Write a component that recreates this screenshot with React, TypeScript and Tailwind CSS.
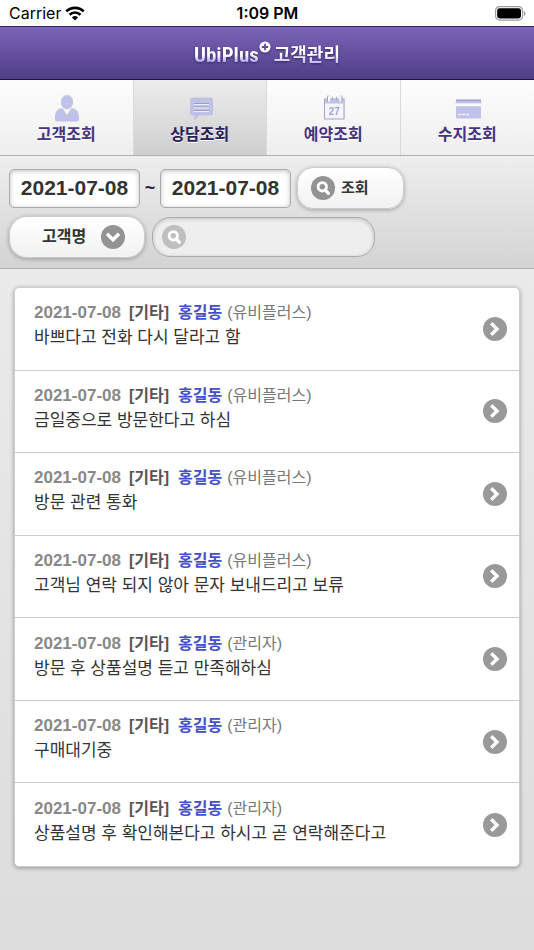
import { useState, type ReactNode } from 'react';
import clsx from 'clsx';

interface Consult {
  id: number;
  date: string;
  type: string;
  customer: string;
  writer: string;
  memo: string;
}

const CONSULTS: Consult[] = [
  { id: 1, date: '2021-07-08', type: '기타', customer: '홍길동', writer: '유비플러스', memo: '바쁘다고 전화 다시 달라고 함' },
  { id: 2, date: '2021-07-08', type: '기타', customer: '홍길동', writer: '유비플러스', memo: '금일중으로 방문한다고 하심' },
  { id: 3, date: '2021-07-08', type: '기타', customer: '홍길동', writer: '유비플러스', memo: '방문 관련 통화' },
  { id: 4, date: '2021-07-08', type: '기타', customer: '홍길동', writer: '유비플러스', memo: '고객님 연락 되지 않아 문자 보내드리고 보류' },
  { id: 5, date: '2021-07-08', type: '기타', customer: '홍길동', writer: '관리자', memo: '방문 후 상품설명 듣고 만족해하심' },
  { id: 6, date: '2021-07-08', type: '기타', customer: '홍길동', writer: '관리자', memo: '구매대기중' },
  { id: 7, date: '2021-07-08', type: '기타', customer: '홍길동', writer: '관리자', memo: '상품설명 후 확인해본다고 하시고 곧 연락해준다고' }
];

function RoundIcon({ children, className }: { children: ReactNode; className?: string }) {
  return (
    <svg
      viewBox="0 0 24 24"
      className={clsx('size-6 shrink-0', className)}
      fill="none"
      stroke="#fff"
      aria-hidden="true"
    >
      <circle cx="12" cy="12" r="12" fill="currentColor" stroke="none" />
      {children}
    </svg>
  );
}

function SearchIcon({ className }: { className?: string }) {
  return (
    <RoundIcon className={className}>
      <circle cx="11.3" cy="10.8" r="4.2" strokeWidth="2.8" />
      <path d="M14.2 14 L17.4 17.4" strokeWidth="3.2" strokeLinecap="round" />
    </RoundIcon>
  );
}

function StatusBar() {
  return (
    <div className="grid h-[26px] grid-cols-3 items-center bg-white pr-2 pl-[9px] font-['Inter',sans-serif] text-base text-black">
      <div className="flex items-center gap-1">
        <span>Carrier</span>
        <svg viewBox="0 0 20 15" className="h-[15px] w-5" fill="none" stroke="#000" strokeWidth="2.6" aria-hidden="true">
          <path d="M1.3 5.4 A12.5 12.5 0 0 1 18.7 5.4" />
          <path d="M4.5 8.7 A8 8 0 0 1 15.5 8.7" />
          <path d="M10 14.6 L6.9 11.4 A4.6 4.6 0 0 1 13.1 11.4 Z" fill="#000" stroke="none" />
        </svg>
      </div>
      <span className="text-center font-semibold">1:09 PM</span>
      <svg viewBox="0 0 31 15" className="h-[15px] w-[31px] justify-self-end" aria-hidden="true">
        <rect x="0.6" y="0.6" width="27" height="13.5" rx="4" fill="none" stroke="#9b9b9b" strokeWidth="1.2" />
        <rect x="2.2" y="2.2" width="23.8" height="10.3" rx="2.4" fill="#000" />
        <path d="M29 5 C31 6 31 9 29 10 Z" fill="#9b9b9b" />
      </svg>
    </div>
  );
}

function TitleBar() {
  return (
    <header className="flex h-[54px] items-center justify-center border-t border-b border-t-[#36265f] border-b-[#22104e] bg-linear-to-b from-[#7b64b8] to-[#503e87] pt-[3px]">
      <h1 className="flex items-center drop-shadow-[0_1px_1px_rgba(30,15,70,0.6)]">
        <span className="bg-linear-to-b from-white from-50% to-[#b4a2f5] to-75% bg-clip-text font-['Roboto_Condensed','Roboto',sans-serif] text-[21px] leading-7 font-bold text-transparent">
          UbiPlus
        </span>
        <svg viewBox="0 0 12 12" className="mr-[3px] size-3 self-start" aria-hidden="true">
          <circle cx="6" cy="6" r="5.6" fill="#fff" />
          <path d="M6 2.8 V9.2 M2.8 6 H9.2" stroke="#5f4b9b" strokeWidth="1.8" />
        </svg>
        <span className="bg-linear-to-b from-white from-50% to-[#c4b4fa] to-80% bg-clip-text text-lg leading-7 font-bold text-transparent">
          고객관리
        </span>
      </h1>
    </header>
  );
}

const TABS = [
  {
    label: '고객조회',
    icon: (
      <>
        <ellipse cx="15" cy="7.5" rx="6" ry="6.7" />
        <path d="M3 24 C3 17 5.5 14.2 10.5 14 L15 21 L19.5 14 C24.5 14.2 27 17 27 24 Q27 26.5 24.5 26.5 H5.5 Q3 26.5 3 24 Z" />
      </>
    )
  },
  {
    label: '상담조회',
    icon: (
      <>
        <path d="M6 3.5 H25 Q27 3.500 27 6 V18 Q27 20.500 24.500 20.500 H13 L8.500 25.500 V20.500 H6.500 Q4 20.500 4 18 V6 Q4 3.500 6 3.500 Z" />
        <path d="M8 8.500 H23 M8 12 H23 M8 15.500 H23" stroke="#9c9cc0" />
        <path d="M8 9.500 H23 M8 13 H23 M8 16.500 H23" stroke="#eeeefa" />
      </>
    )
  },
  {
    label: '예약조회',
    icon: (
      <>
        <rect x="5.500" y="4.500" width="19.500" height="19.500" fill="#f4f4fa" stroke="#a3a4c9" />
        <rect x="6" y="4" width="18.500" height="4.500" />
        <path d="M10 1.500 V6.500 M21.500 1.500 V6.500" stroke="#fff" strokeWidth="2" />
        <path d="M8.500 1.500 V7 M23 1.500 V7 M13.500 2.500 V5 M17.500 2.500 V5" stroke="#a3a4c9" />
        <text
          x="15.300"
          y="19.500"
          textAnchor="middle"
          fontSize="10"
          fontWeight="700"
          fontFamily="Liberation Sans, sans-serif"
          fill="#a2a3cf"
        >
          27
        </text>
      </>
    )
  },
  {
    label: '수지조회',
    icon: (
      <>
        <rect x="3" y="5" width="25" height="18.500" rx="1" />
        <path d="M3 5.500 H28" stroke="#9fa0c9" />
        <path d="M2.500 9.800 H28.500" stroke="#f8f8fb" strokeWidth="3" />
        <path d="M5 19.500 H16" stroke="#f4f4fc" strokeWidth="1.300" strokeDasharray="3 1" />
      </>
    )
  }
];

function TabMenu() {
  const [active, setActive] = useState('상담조회');

  return (
    <nav className="grid h-[75px] grid-cols-4 divide-x divide-[#d8d8de]">
      {TABS.map((tab) => (
        <button
          key={tab.label}
          type="button"
          onClick={() => setActive(tab.label)}
          className={clsx(
            'flex flex-col items-center bg-linear-to-b pt-[15px] text-base leading-6 font-bold',
            active === tab.label
              ? 'from-[#ececec] to-[#cfcfcf] text-[#2b2057]'
              : 'from-[#fdfdfd] to-[#eeeeee] text-[#45347d]'
          )}
        >
          <svg
            viewBox="0 0 28 28"
            className="size-7 overflow-visible [filter:drop-shadow(0_-1px_0_rgba(110,110,150,0.3))]"
            fill="#c0c1e9"
            aria-hidden="true"
          >
            {tab.icon}
          </svg>
          <span className="[text-shadow:0_1px_0_#fff]">{tab.label}</span>
        </button>
      ))}
    </nav>
  );
}

function DateField({ label, value, onChange }: { label: string; value: string; onChange: (v: string) => void }) {
  return (
    <input
      type="text"
      aria-label={label}
      value={value}
      onChange={(e) => onChange(e.target.value)}
      className="h-[39px] w-[131px] rounded-[5px] border border-[#aaa] bg-white text-center font-['Liberation_Sans',sans-serif] text-[21px] font-bold text-[#333] shadow-[inset_0_1px_5px_rgba(0,0,0,0.25)]"
    />
  );
}

function SearchForm() {
  const [from, setFrom] = useState('2021-07-08');
  const [to, setTo] = useState('2021-07-08');
  const [keyword, setKeyword] = useState('');

  return (
    <form
      onSubmit={(e) => e.preventDefault()}
      className="flex flex-col gap-[7px] border-t border-b border-t-[#b3adab] border-b-[#b3b3b3] bg-linear-to-b from-[#eeeeee] to-[#d3d3d3] px-[9px] pt-[11px] pb-[10px]"
    >
      <div className="flex items-center">
        <DateField label="시작일" value={from} onChange={setFrom} />
        <span className="w-5 text-center text-lg leading-6 font-bold text-[#2b2057]">~</span>
        <DateField label="종료일" value={to} onChange={setTo} />
        <button
          type="submit"
          className="ml-[6px] flex h-[42px] w-[107px] items-center gap-[6px] rounded-2xl border border-[#ccc] bg-linear-to-b from-white to-[#f1f1f1] pl-[13px] text-[15px] font-bold text-[#333] shadow-[0_1px_4px_rgba(0,0,0,0.3)]"
        >
          <SearchIcon className="text-[#939393]" />
          조회
        </button>
      </div>
      <div className="flex items-center gap-[7px]">
        <div className="relative">
          <select
            aria-label="검색 조건"
            className="h-[42px] w-[136px] appearance-none rounded-[18px] border border-[#ccc] bg-linear-to-b from-white to-[#f1f1f1] pl-8 text-base font-bold text-[#333] shadow-[0_1px_4px_rgba(0,0,0,0.3)]"
          >
            <option>고객명</option>
          </select>
          <RoundIcon className="pointer-events-none absolute top-[9px] right-5 text-[#939393]">
            <path d="M7.2 10 L12 14.8 L16.8 10" strokeWidth="3.4" strokeLinecap="square" />
          </RoundIcon>
        </div>
        <label className="flex h-10 w-[223px] items-center rounded-[18px] border border-[#aaa] bg-[#eee] pl-[9px] shadow-[inset_0_1px_4px_rgba(0,0,0,0.2)]">
          <SearchIcon className="text-[#bfbfbf]" />
          <input
            type="search"
            aria-label="검색어"
            value={keyword}
            onChange={(e) => setKeyword(e.target.value)}
            className="min-w-0 flex-1 bg-transparent px-2 text-base text-[#333] outline-none"
          />
        </label>
      </div>
    </form>
  );
}

function ConsultRow({ item }: { item: Consult }) {
  return (
    <li className="border-b border-[#ccc] last:border-b-0">
      <a href="#" className="flex h-full items-center justify-between gap-3 pr-3 pl-[19px]">
        <div className="min-w-0 pb-[7px]">
          <p className="flex items-center text-base leading-[25px]">
            <span className="font-['Liberation_Sans',sans-serif] text-[17px] font-bold text-[#888]">{item.date}</span>
            <span className="ml-2 font-bold text-[#555]">[{item.type}]</span>
            <span className="ml-[9px] font-bold text-[#4350cc]">{item.customer}</span>
            <span className="ml-[5px] text-[#777]">({item.writer})</span>
          </p>
          <p className="truncate text-[17px] leading-[25px] text-[#333]">{item.memo}</p>
        </div>
        <RoundIcon className="text-[#999]">
          <path d="M9.4 7.4 L14 12 L9.4 16.6" strokeWidth="3.4" strokeLinecap="square" />
        </RoundIcon>
      </a>
    </li>
  );
}

export default function App() {
  return (
    <div className="flex min-h-screen flex-col bg-[#e0e0e0] font-['Liberation_Sans','Noto_Sans_CJK_KR',sans-serif]">
      <StatusBar />
      <TitleBar />
      <TabMenu />
      <SearchForm />
      <main className="flex-1 bg-linear-to-b from-[#eaeaea] to-[#dcdcdc] px-[14px] py-[18px]">
        <ul className="grid min-h-[580px] auto-rows-fr rounded-[5px] border border-[#ccc] bg-white shadow-[0_1px_4px_rgba(0,0,0,0.35)]">
          {CONSULTS.map((item) => (
            <ConsultRow key={item.id} item={item} />
          ))}
        </ul>
      </main>
    </div>
  );
}
